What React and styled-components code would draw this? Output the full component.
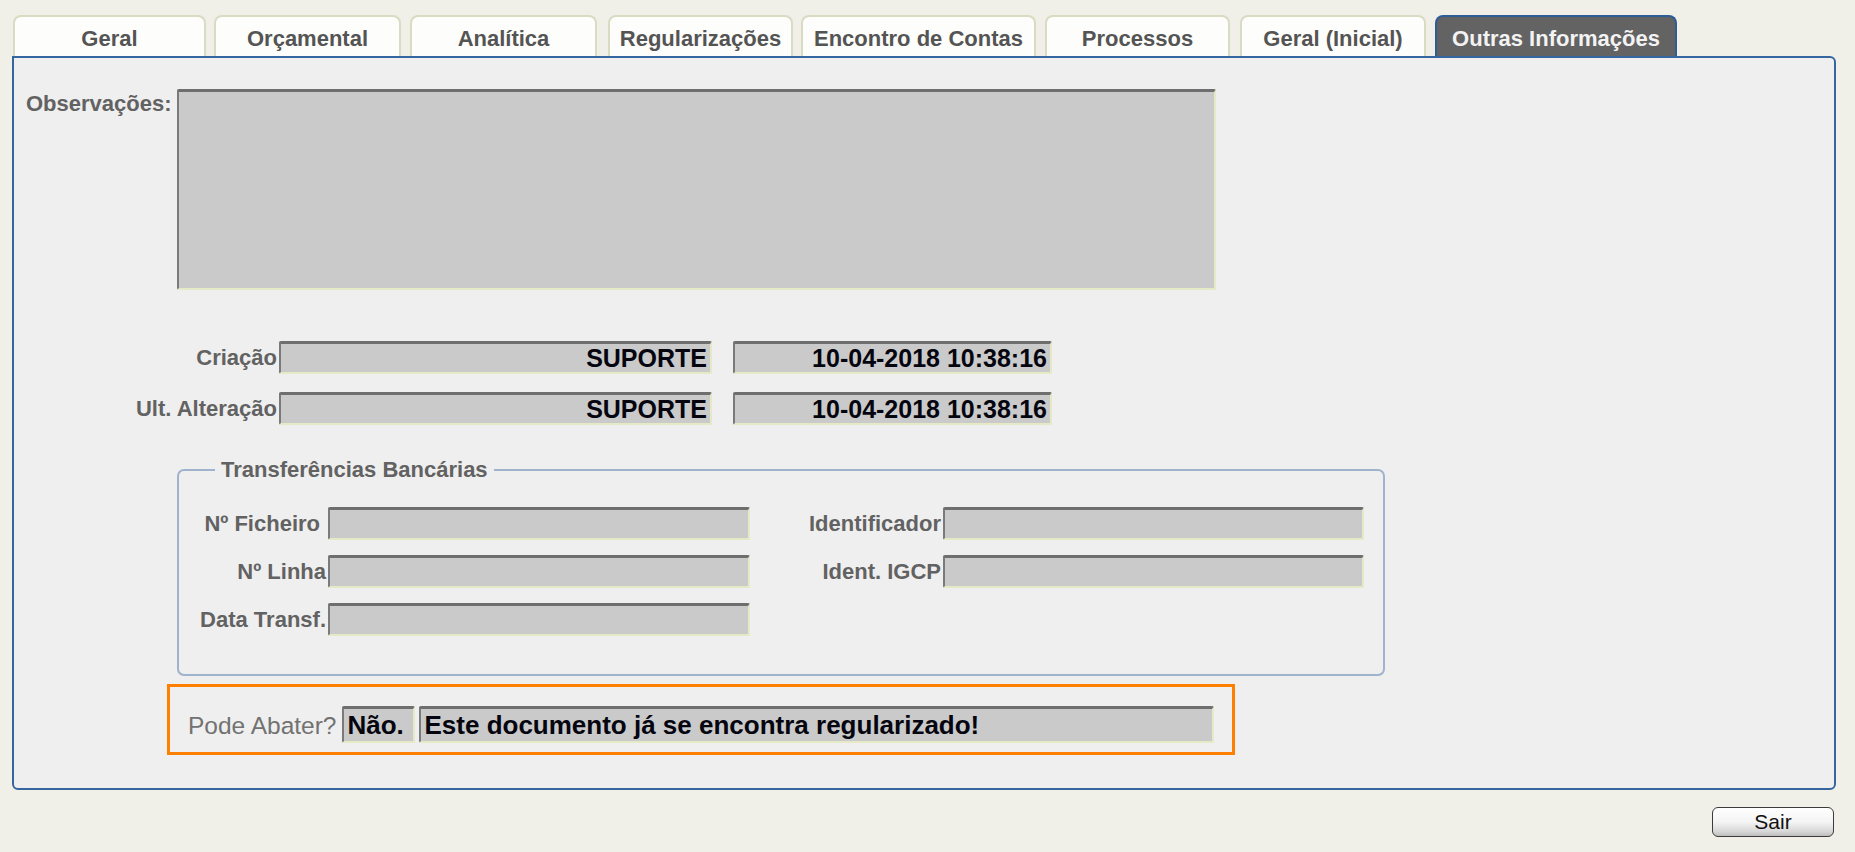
import React from 'react'
import styled, { createGlobalStyle } from 'styled-components';

const GlobalStyle = createGlobalStyle`
  html, body {
    margin: 0;
    padding: 0;
    background: #f0efe8;
    font-family: "Liberation Sans", Arial, sans-serif;
  }
  * { box-sizing: border-box; }
`;

const tabs = [
  { label: 'Geral', w: 193, gap: 8 },
  { label: 'Orçamental', w: 187, gap: 9 },
  { label: 'Analítica', w: 187, gap: 11 },
  { label: 'Regularizações', w: 185, gap: 8 },
  { label: 'Encontro de Contas', w: 235, gap: 9 },
  { label: 'Processos', w: 185, gap: 10 },
  { label: 'Geral (Inicial)', w: 186, gap: 9 },
  { label: 'Outras Informações', w: 242, gap: 0, active: true },
];

export default function App() {
  return (
    <Page>
      <GlobalStyle />
      <TabBar>
        {tabs.map((t) => (
          <Tab key={t.label} $w={t.w} $gap={t.gap} $active={t.active}>
            {t.label}
          </Tab>
        ))}
      </TabBar>

      <Panel>
        <ObsRow>
          <ObsLabel>Observações:</ObsLabel>
          <Field $w={1039} $h={201} />
        </ObsRow>

        <AuditRow $top={51}>
          <AuditLabel>Criação</AuditLabel>
          <Field $w={433}>SUPORTE</Field>
          <Field $w={319}>10-04-2018 10:38:16</Field>
        </AuditRow>
        <AuditRow $top={18}>
          <AuditLabel>Ult. Alteração</AuditLabel>
          <Field $w={433}>SUPORTE</Field>
          <Field $w={319}>10-04-2018 10:38:16</Field>
        </AuditRow>

        <Group>
          <legend>Transferências Bancárias</legend>
          <GroupGrid>
            <GroupLabel $pad={8}>Nº Ficheiro</GroupLabel>
            <Field $w={422} />
            <GroupLabel>Identificador</GroupLabel>
            <Field $w={421} />

            <GroupLabel>Nº Linha</GroupLabel>
            <Field $w={422} />
            <GroupLabel>Ident. IGCP</GroupLabel>
            <Field $w={421} />

            <GroupLabel>Data Transf.</GroupLabel>
            <Field $w={422} />
          </GroupGrid>
        </Group>

        <Highlight>
          <AbaterLabel>Pode Abater?</AbaterLabel>
          <Field $w={73} $h={37} $big $left>Não.</Field>
          <Field $w={795} $h={37} $big $left>Este documento já se encontra regularizado!</Field>
        </Highlight>
      </Panel>

      <Footer>
        <Button>Sair</Button>
      </Footer>
    </Page>
  )
}

const Page = styled.div`
  height: 852px;
  padding: 15px 19px 0 12px;
`;

const TabBar = styled.div`
  display: flex;
  height: 41px;
  padding-left: 1px;
`;

const Tab = styled.div`
  width: ${(p) => p.$w}px;
  margin-right: ${(p) => p.$gap}px;
  height: 41px;
  display: flex;
  align-items: center;
  justify-content: center;
  padding-top: 5px;
  border: 2px solid ${(p) => (p.$active ? '#2d5d96' : '#d9dcc2')};
  border-bottom: none;
  border-radius: 8px 8px 0 0;
  background: ${(p) => (p.$active ? '#636363' : '#fdfdfb')};
  color: ${(p) => (p.$active ? '#f3f3f3' : '#545454')};
  font-size: 22px;
  font-weight: bold;
  white-space: nowrap;
`;

const Panel = styled.div`
  width: 1824px;
  height: 734px;
  border: 2px solid #3566a0;
  border-radius: 0 6px 6px 6px;
  background: #efefef;
  padding: 31px 0 0 12px;
`;

const ObsRow = styled.div`
  display: flex;
  align-items: flex-start;
`;

const ObsLabel = styled.div`
  width: 151px;
  padding-top: 2px;
  font-size: 22px;
  font-weight: bold;
  color: #626262;
  line-height: 26px;
`;

const AuditRow = styled.div`
  display: flex;
  align-items: center;
  gap: 21px;
  margin-top: ${(p) => p.$top}px;
`;

const AuditLabel = styled.div`
  width: 253px;
  margin-right: -21px;
  padding-right: 2px;
  text-align: right;
  font-size: 22px;
  font-weight: bold;
  color: #626262;
`;

const Field = styled.div`
  width: ${(p) => p.$w}px;
  height: ${(p) => p.$h || 33}px;
  background: #cacaca;
  border-top: 3px solid #6e6e6e;
  border-left: 2px solid #7a7a7a;
  border-right: 2px solid #e6e9c6;
  border-bottom: 2px solid #e6e9c6;
  border-radius: 2px;
  display: flex;
  align-items: center;
  justify-content: ${(p) => (p.$left ? 'flex-start' : 'flex-end')};
  padding: 0 3px 0 3px;
  font-size: ${(p) => (p.$big ? 26 : 25)}px;
  font-weight: bold;
  color: #05050f;
  white-space: nowrap;
  overflow: hidden;
`;

const Group = styled.fieldset`
  margin: 31px 0 0 151px;
  width: 1208px;
  padding: 0 0 38px 0;
  border: 2px solid #9fb3cd;
  border-radius: 7px;
  legend {
    margin-left: 36px;
    padding: 0 6px;
    font-size: 22px;
    font-weight: bold;
    line-height: 28px;
    color: #626262;
  }
`;

const GroupGrid = styled.div`
  display: grid;
  grid-template-columns: 149px 422px 193px 421px;
  row-gap: 15px;
  align-items: center;
  padding-top: 23px;
`;

const GroupLabel = styled.div`
  text-align: right;
  padding-right: ${(p) => p.$pad || 2}px;
  font-size: 22px;
  font-weight: bold;
  color: #626262;
  white-space: nowrap;
`;

const Highlight = styled.div`
  margin: 8px 0 0 141px;
  width: 1068px;
  height: 71px;
  border: 3px solid #ff8000;
  display: flex;
  align-items: flex-end;
  gap: 4px;
  padding: 0 0 9px 18px;
`;

const AbaterLabel = styled.div`
  margin-right: 2px;
  padding-bottom: 3px;
  font-size: 24.5px;
  color: #727272;
`;

const Footer = styled.div`
  display: flex;
  justify-content: flex-end;
  padding: 17px 2px 0 0;
`;

const Button = styled.button`
  width: 122px;
  height: 30px;
  border: 1px solid #3c3c3c;
  border-radius: 6px;
  background: linear-gradient(#ffffff 0%, #f4f4f4 50%, #d6d6d6 85%, #bdbdbd 100%);
  font-family: "Liberation Sans", Arial, sans-serif;
  font-size: 21px;
  color: #111;
  padding: 0;
`;
